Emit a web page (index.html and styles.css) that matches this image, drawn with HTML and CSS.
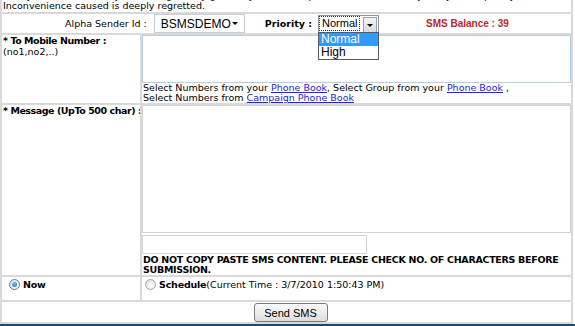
FILE: index.html
```html
<!DOCTYPE html>
<html>
<head>
    <meta http-equiv="Content-Type" content="text/html; charset=UTF-8">
    <title>Send SMS</title>
    <link rel="stylesheet" href="styles.css">
</head>
<body>
    <table class="sms-form">
        <col class="label-col">
        <col>
        <tr>
            <td colspan="2">
                <div class="notice">
                    <p class="cut">Kindly note that delivery of messages may get delayed due to operator side issues, Any delay is temporary.</p>
                    <p>Inconvenience caused is deeply regretted.</p>
                </div>
            </td>
        </tr>
        <tr>
            <td colspan="2">
                <div class="sender-bar">
                    <span class="sender-label">Alpha Sender Id :</span>
                    <div class="select sender-select">
                        <span>BSMSDEMO</span>
                        <span class="arrow"></span>
                    </div>
                    <strong class="priority-label">Priority :</strong>
                    <div class="priority">
                        <div class="select priority-select">
                            <span class="focus">Normal</span>
                            <span class="arrow-btn"><span class="arrow"></span></span>
                        </div>
                        <ul class="dropdown">
                            <li class="active">Normal</li>
                            <li>High</li>
                        </ul>
                    </div>
                    <strong class="balance">SMS Balance : 39</strong>
                </div>
            </td>
        </tr>
        <tr>
            <td class="label-cell">
                <strong>* To Mobile Number :</strong><br>
                (no1,no2,..)
            </td>
            <td>
                <textarea class="mobile-box"></textarea>
                <div class="hint">
                    Select Numbers from your <a href="#">Phone Book</a>, Select Group from your <a href="#">Phone Book</a> ,<br>
                    Select Numbers from <a href="#">Campaign Phone Book</a>
                </div>
            </td>
        </tr>
        <tr>
            <td class="label-cell">
                <strong class="nowrap">* Message (UpTo 500 char) :</strong>
            </td>
            <td>
                <textarea class="message-box"></textarea>
                <input class="count-box" type="text">
                <strong class="warning">DO NOT COPY PASTE SMS CONTENT. PLEASE CHECK NO. OF CHARACTERS BEFORE SUBMISSION.</strong>
            </td>
        </tr>
        <tr class="when-row">
            <td class="label-cell">
                <label class="radio-line"><span class="radio checked"></span><strong>Now</strong></label>
            </td>
            <td>
                <label class="radio-line schedule"><span class="radio"></span><strong>Schedule</strong>(Current Time : 3/7/2010 1:50:43 PM)</label>
            </td>
        </tr>
        <tr>
            <td colspan="2" class="submit-cell">
                <button class="send-btn" type="button">Send SMS</button>
            </td>
        </tr>
    </table>
    <div class="frame-edge"></div>
</body>
</html>
```

FILE: styles.css
```css
body {
    margin: 0;
    background: #fff;
    font-family: "DejaVu Sans", Verdana, sans-serif;
    font-size: 9.5px;
    line-height: 10px;
    color: #000;
    overflow: hidden;
}

.sms-form {
    table-layout: fixed;
    border-collapse: separate;
    border-spacing: 2px;
    background: #d9d9d9;
    width: 573px;
    margin-top: -2px;
}

.label-col {
    width: 138px;
}

.sms-form td {
    background: #fff;
    padding: 0;
    vertical-align: top;
}

.notice {
    height: 12px;
    overflow: hidden;
    padding-left: 1px;
}

.notice p {
    margin: 0;
    white-space: nowrap;
}

.notice .cut {
    margin-top: -9px;
}

.sender-bar {
    display: flex;
    align-items: center;
    height: 19px;
    padding-left: 63px;
}

.sender-label {
    margin-right: 7px;
}

.select {
    position: relative;
    display: flex;
    align-items: center;
    box-sizing: border-box;
    background: #fff;
    font-family: "Liberation Sans", Arial, sans-serif;
}

.sender-select {
    width: 91px;
    height: 19px;
    border: 1px solid #c9ced3;
    padding-left: 6px;
    font-size: 12px;
}

.arrow {
    position: absolute;
    right: 6px;
    top: 7px;
    width: 0;
    height: 0;
    border-left: 3px solid transparent;
    border-right: 3px solid transparent;
    border-top: 3px solid #000;
}

.priority-label {
    margin-left: 20px;
}

.priority {
    position: relative;
    margin-left: 6px;
}

.priority-select {
    width: 61px;
    height: 18px;
    border: 1px solid #8c959e;
    padding-left: 1px;
    font-size: 11px;
}

.focus {
    padding: 0 2px;
    outline: 1px dotted #333;
    line-height: 13px;
}

.arrow-btn {
    position: absolute;
    right: 1px;
    top: 1px;
    width: 12px;
    height: 14px;
    border: 1px solid #9aa2aa;
    background: linear-gradient(#f4f4f4, #d9dbde);
}

.arrow-btn .arrow {
    right: 3px;
    top: 6px;
}

.dropdown {
    position: absolute;
    left: 0;
    top: 17px;
    width: 61px;
    margin: 0;
    padding: 0;
    list-style: none;
    box-sizing: border-box;
    border: 1px solid #5a5a5a;
    background: #fff;
    font-family: "Liberation Sans", Arial, sans-serif;
    font-size: 12px;
    line-height: 13px;
}

.dropdown li {
    padding-left: 2px;
}

.dropdown li.active {
    background: #3399ff;
    color: #fff;
}

.balance {
    margin-left: 47px;
    color: #b4282c;
    font-family: "Liberation Sans", Arial, sans-serif;
    font-size: 10px;
}

.label-cell {
    padding-left: 1px !important;
    line-height: 11px;
    overflow: hidden;
}

.label-cell strong {
    letter-spacing: -0.45px;
}

.nowrap {
    white-space: nowrap;
}

textarea,
input {
    display: block;
    box-sizing: border-box;
    margin: 0;
    padding: 0;
    resize: none;
    background: #fff;
}

.mobile-box {
    width: 100%;
    height: 48px;
    border: 1px solid #b3cde2;
}

.hint {
    padding-left: 1px;
    height: 20px;
}

.hint a {
    color: #2323d8;
}

.message-box {
    width: 100%;
    height: 128px;
    border: 1px solid #cfd3d6;
}

.count-box {
    width: 225px;
    height: 19px;
    margin-top: 2px;
    border: 1px solid #d4d7da;
}

.warning {
    display: block;
    margin-top: 1px;
    padding-left: 1px;
    height: 20px;
    letter-spacing: -0.3px;
}

.when-row td {
    height: 23px;
}

.radio-line {
    display: flex;
    align-items: center;
    height: 11px;
    margin-top: 2px;
    padding-left: 6px;
}

.radio-line strong {
    letter-spacing: -0.2px;
}

.schedule {
    padding-left: 3px;
}

.radio {
    display: inline-block;
    box-sizing: border-box;
    width: 11px;
    height: 11px;
    margin-right: 3px;
    border-radius: 50%;
    border: 1px solid #9aa6b4;
    background: radial-gradient(circle at 60% 65%, #ffffff, #d3d8de);
    position: relative;
}

.radio.checked {
    border-color: #5d7ea3;
}

.radio.checked::after {
    content: "";
    position: absolute;
    left: 2px;
    top: 2px;
    width: 5px;
    height: 5px;
    border-radius: 50%;
    background: radial-gradient(circle at 40% 35%, #8fc1f2, #1f5fae);
}

.submit-cell {
    height: 20px;
    text-align: center;
}

.send-btn {
    width: 74px;
    height: 19px;
    margin: 1px 0 0 8px;
    padding: 0;
    border: 1px solid #7a7a7a;
    border-radius: 3px;
    background: linear-gradient(#fbfbfb, #dedede);
    font-family: "Liberation Sans", Arial, sans-serif;
    font-size: 11px;
    color: #000;
}

.frame-edge {
    height: 4px;
    background: #1b4a78;
}
```
